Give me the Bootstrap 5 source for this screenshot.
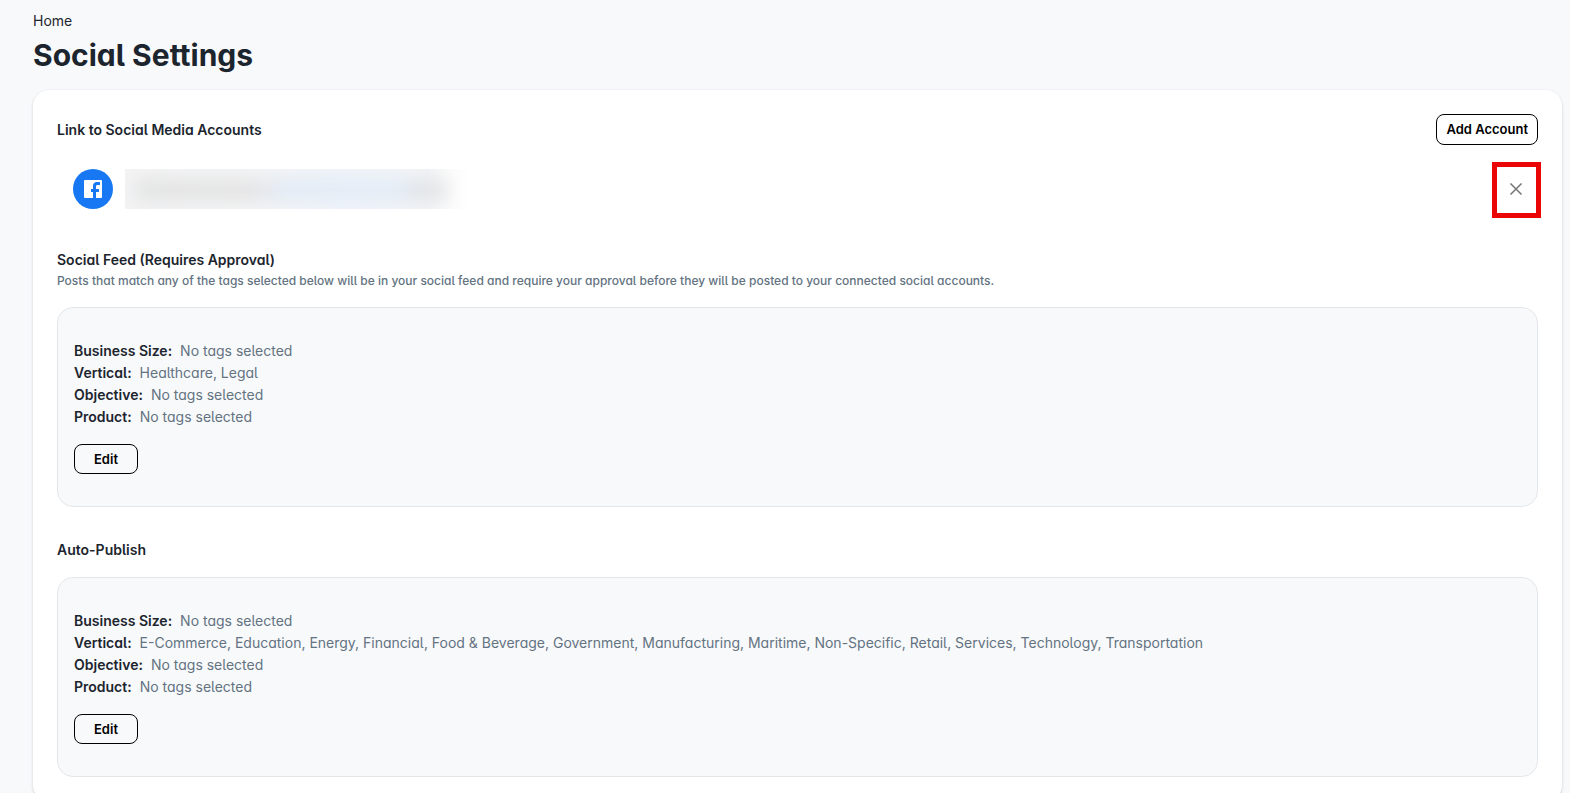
<!DOCTYPE html>
<html lang="en">
<head>
<meta charset="utf-8">
<meta name="viewport" content="width=device-width, initial-scale=1">
<title>Social Settings</title>
<link href="https://cdn.jsdelivr.net/npm/bootstrap@5.3.0/dist/css/bootstrap.min.css" rel="stylesheet">
<style>
  body { background: #f8f9fb; color: #1c252e; font-family: Inter, "Open Sans", sans-serif; font-size: 14px; line-height: 22px; font-feature-settings: "cv11", "cv05"; }
  .page-wrap { padding: 10px 8px 40px 33px; }
  .crumb-link { color: #1c252e; text-decoration: none; }
  .page-title { font-size: 30px; line-height: 38px; font-weight: 700; margin: 4px 0 16px; font-variant-ligatures: none; }
  .settings-card { border: 0; border-radius: 16px; padding: 24px; background: #fff; box-shadow: 0 1px 3px rgba(28, 37, 46, .2); }
  .section-title { font-size: 14px; line-height: 22px; font-weight: 600; margin: 0; }
  .section-note { font-size: 12px; line-height: 20px; font-weight: 500; color: #637381; margin: 0; }
  .btn-line { --bs-btn-padding-y: 4px; --bs-btn-padding-x: 9px; --bs-btn-font-size: 13px; --bs-btn-font-weight: 600; --bs-btn-color: #000; --bs-btn-border-color: #000; --bs-btn-border-radius: 8px; line-height: 21px; min-width: 64px; }
  .tag-panel .btn-line { line-height: 20px; }
  .account-row { margin: 16px 0 32px; padding: 8px 16px; }
  .account-name { width: 344px; height: 40px; margin-left: 12px; overflow: hidden; background: linear-gradient(90deg, #f3f3f4 0, #f3f4f5 40%, #f0f4f9 60%, #f2f4f6 88%, #fcfcfc 95%, #fff 100%); }
  .account-name::before { content: ""; display: block; height: 20px; margin: 11px 22px 0 12px; filter: blur(9px); background: linear-gradient(90deg, #e1e2e2 0, #e3e3e4 38%, #e2eaf5 46%, #e2ebf6 84%, #dfe2e5 92%, #e5e5e5 100%); }
  .account-name::before { margin-top: 0; }
  .account-name { padding-top: 11px; }
  .remove-frame { position: absolute; right: -3px; top: 1px; width: 49px; height: 56px; border: 5px solid #ea0606; pointer-events: none; }
  .remove-btn { width: 20px; height: 20px; margin-right: -4px; }
  .tag-panel { border: 1px solid #e4e7ea; border-radius: 16px; background: #f8f9fb; padding: 32px 16px; margin-top: 16px; }
  .tag-list { margin: 0 0 16px; }
  .tag-list dt { font-weight: 600; }
  .tag-list dd { margin: 0; color: #637381; }
  .publish-section { margin-top: 32px; }
</style>
</head>
<body>
<main class="page-wrap">
  <nav aria-label="Breadcrumb"><a class="crumb-link" href="#">Home</a></nav>
  <h1 class="page-title">Social Settings</h1>
  <div class="card settings-card">
    <div class="d-flex justify-content-between align-items-center">
      <h2 class="section-title">Link to Social Media Accounts</h2>
      <button type="button" class="btn btn-line">Add Account</button>
    </div>
    <div class="account-row position-relative d-flex align-items-center">
      <svg width="40" height="40" viewBox="0 0 40 40" role="img" aria-label="Facebook"><circle cx="20" cy="20" r="20" fill="#1877f2"/><path fill="#fff" d="M12 11h16a1 1 0 0 1 1 1v16a1 1 0 0 1-1 1h-5v-6h3v-3h-3v-2.500c0-1 .5-1.500 1.500-1.500H27v-3h-3c-2.500 0-4 1.500-4 4v3h-2v3h2v6h-8a1 1 0 0 1-1-1V12a1 1 0 0 1 1-1z"/></svg>
      <div class="account-name"></div>
      <button type="button" class="remove-btn btn p-0 border-0 ms-auto d-flex align-items-center justify-content-center" aria-label="Remove account"><svg width="20" height="20" viewBox="0 0 20 20" fill="none" stroke="#757575" stroke-width="1.500"><path d="M4.500 4.500l11 11M15.500 4.500l-11 11"/></svg></button>
      <span class="remove-frame"></span>
    </div>
    <section>
      <h2 class="section-title">Social Feed (Requires Approval)</h2>
      <p class="section-note">Posts that match any of the tags selected below will be in your social feed and require your approval before they will be posted to your connected social accounts.</p>
      <div class="tag-panel">
        <dl class="tag-list">
          <div class="d-flex gap-2"><dt>Business Size:</dt><dd>No tags selected</dd></div>
          <div class="d-flex gap-2"><dt>Vertical:</dt><dd>Healthcare, Legal</dd></div>
          <div class="d-flex gap-2"><dt>Objective:</dt><dd>No tags selected</dd></div>
          <div class="d-flex gap-2"><dt>Product:</dt><dd>No tags selected</dd></div>
        </dl>
        <button type="button" class="btn btn-line">Edit</button>
      </div>
    </section>
    <section class="publish-section">
      <h2 class="section-title">Auto-Publish</h2>
      <div class="tag-panel">
        <dl class="tag-list">
          <div class="d-flex gap-2"><dt>Business Size:</dt><dd>No tags selected</dd></div>
          <div class="d-flex gap-2"><dt>Vertical:</dt><dd>E-Commerce, Education, Energy, Financial, Food &amp; Beverage, Government, Manufacturing, Maritime, Non-Specific, Retail, Services, Technology, Transportation</dd></div>
          <div class="d-flex gap-2"><dt>Objective:</dt><dd>No tags selected</dd></div>
          <div class="d-flex gap-2"><dt>Product:</dt><dd>No tags selected</dd></div>
        </dl>
        <button type="button" class="btn btn-line">Edit</button>
      </div>
    </section>
  </div>
</main>
<script src="https://cdn.jsdelivr.net/npm/bootstrap@5.3.0/dist/js/bootstrap.bundle.min.js"></script>
</body>
</html>
